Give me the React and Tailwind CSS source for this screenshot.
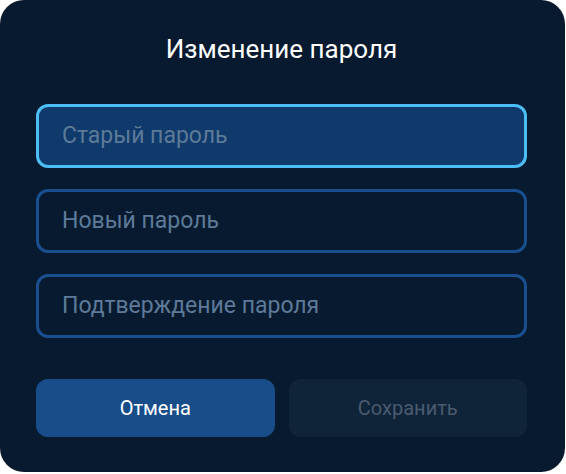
export default function App() {
  return (
    <div className="w-[566px] h-[474px] bg-white" style={{ fontFamily: "Roboto, 'Noto Sans', sans-serif" }}>
      <div className="w-[565px] h-[472px] rounded-[24px] bg-[#081a2f] pl-[36px] pr-[38px] pt-[30px] flex flex-col">
        <h1 className="text-center text-white text-[26px] leading-[38px] font-normal">Изменение пароля</h1>
        <div className="mt-[36px] flex flex-col gap-[21px]">
          <div className="h-[64px] rounded-[12px] border-[3px] border-[#4cbef5] bg-[#0f3a6b] flex items-center px-[23px]">
            <span className="text-[23px] text-[#5d7a99]">Старый пароль</span>
          </div>
          <div className="h-[64px] rounded-[12px] border-[3px] border-[#1a4f8f] flex items-center px-[23px]">
            <span className="text-[23px] text-[#5d7a99]">Новый пароль</span>
          </div>
          <div className="h-[64px] rounded-[12px] border-[3px] border-[#1a4f8f] flex items-center px-[23px]">
            <span className="text-[23px] text-[#5d7a99]">Подтверждение пароля</span>
          </div>
        </div>
        <div className="mt-[41px] flex gap-[14px]">
          <button className="flex-1 h-[58px] rounded-[12px] bg-[#184d8a] text-white text-[20px]">Отмена</button>
          <button className="flex-1 h-[58px] rounded-[12px] bg-[#0f2339] text-[#4a5b70] text-[20px]">Сохранить</button>
        </div>
      </div>
    </div>
  );
}
